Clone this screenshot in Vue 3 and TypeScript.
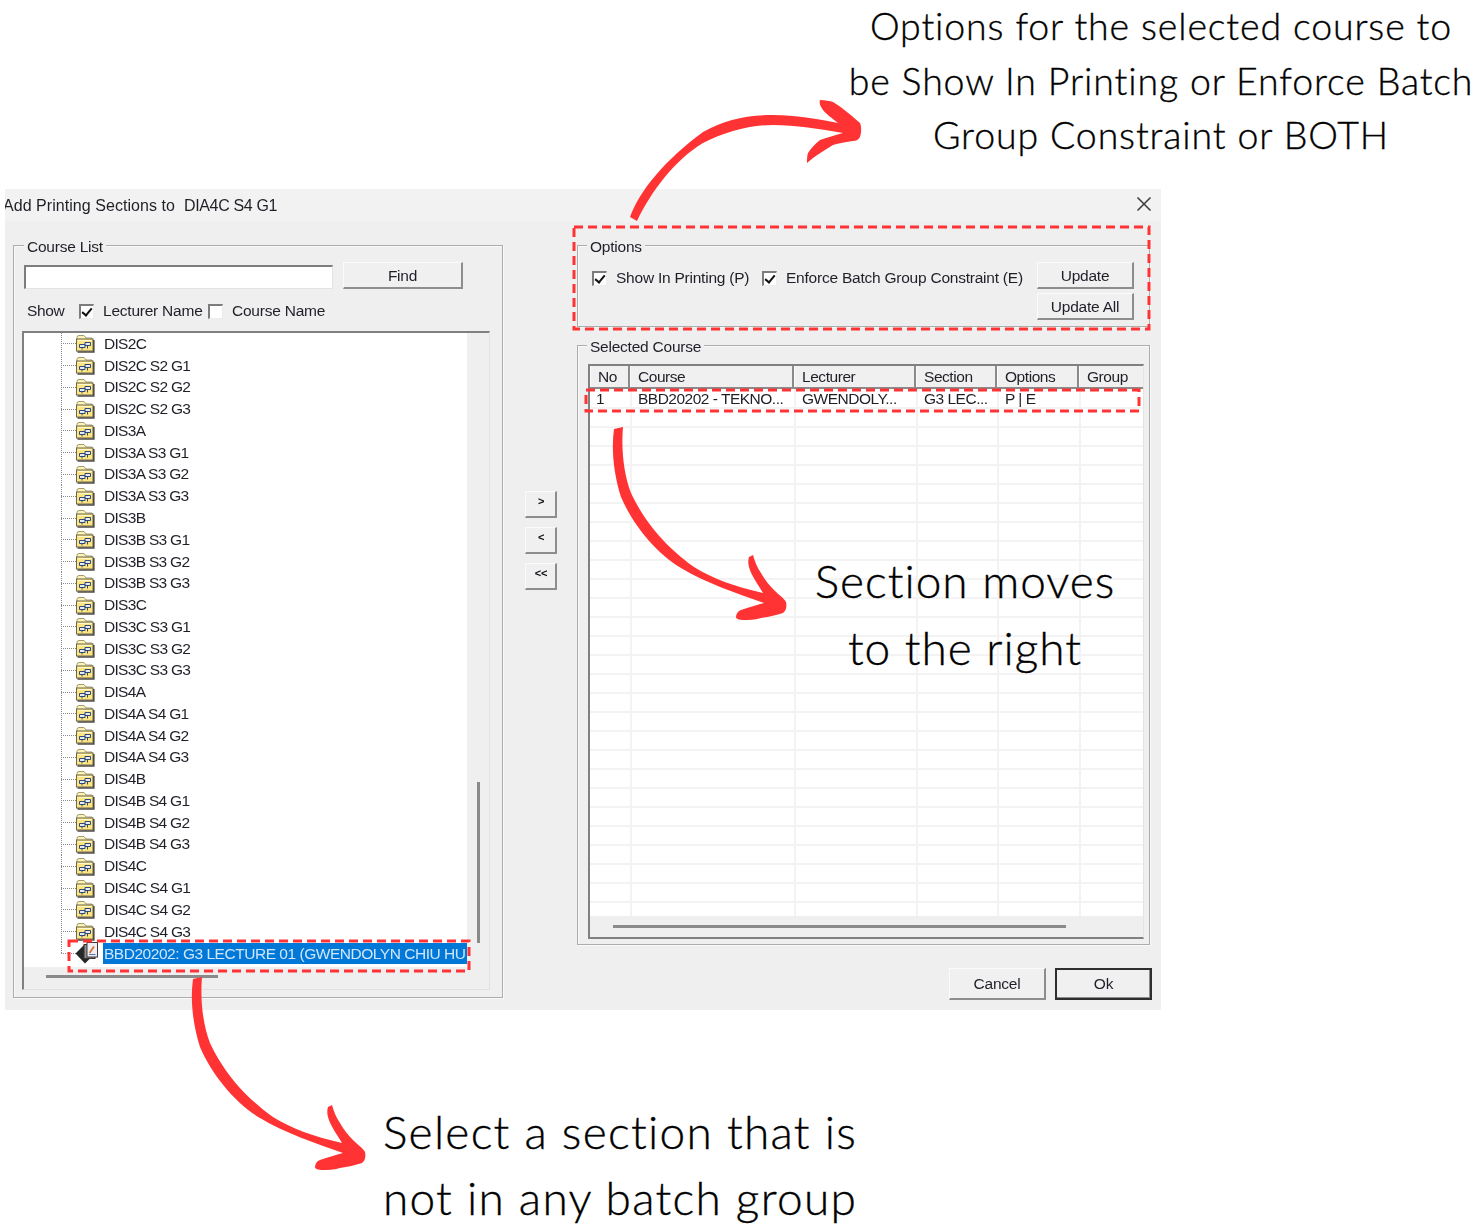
<script setup lang="ts">
const names: string[] = [];
const groups: [string, string, string[]][] = [
  ['DIS2C', 'S2', ['G1', 'G2', 'G3']],
  ['DIS3A', 'S3', ['G1', 'G2', 'G3']],
  ['DIS3B', 'S3', ['G1', 'G2', 'G3']],
  ['DIS3C', 'S3', ['G1', 'G2', 'G3']],
  ['DIS4A', 'S4', ['G1', 'G2', 'G3']],
  ['DIS4B', 'S4', ['G1', 'G2', 'G3']],
  ['DIS4C', 'S4', ['G1', 'G2', 'G3']],
];
for (const [c, s, gs] of groups) {
  names.push(c);
  for (const g of gs) names.push(`${c} ${s} ${g}`);
}
const columns = ['No', 'Course', 'Lecturer', 'Section', 'Options', 'Group'];
const firstRow = ['1', 'BBD20202 - TEKNO...', 'GWENDOLY...', 'G3 LEC...', 'P | E', ''];
const blankRows = Array.from({ length: 27 }, (_, i) => i);
const arrowPath =
  'M193 979 L202 977 C200 1000 203 1025 210 1043 C218 1060 235 1090 273 1117 C290 1128 315 1137 342 1143 C336 1133 330 1125 328 1117 C327 1113 327 1110 328 1107 L332 1105 C334 1112 336 1117 340 1123 C344 1130 348 1135 353 1140 C358 1145 363 1148 365 1152 C366 1157 365 1161 362 1163 C355 1165 348 1167 340 1168 C333 1170 328 1170 323 1170 C318 1170 315 1169 315 1167 C315 1164 317 1161 320 1160 C328 1157 336 1155 343 1153 C315 1143 285 1133 260 1118 C235 1103 212 1075 200 1047 C193 1025 190 1000 193 979 Z';
const topArrow =
  'M630 217 C640 190 665 160 703 132 C725 120 745 115 773 115 C795 115 818 119 838 123 C832 118 826 114 823 110 C820 106 819 103 820 100 C825 100 830 101 833 102 C840 106 850 114 860 123 C862 128 861 134 860 137 C858 140 856 141 853 141 C846 142 839 143 833 145 C826 149 819 154 813 158 L807 163 C807 159 807 156 808 153 C811 148 815 144 820 140 C828 137 836 135 843 133 C820 129 795 125 773 125 C750 125 725 132 703 143 C675 160 652 190 637 221 Z';
</script>

<template>
  <div class="canvas">
    <section class="dialog">
      <header class="titlebar">
        <span class="title">Add Printing Sections to&nbsp; <span class="title-name">DIA4C S4 G1</span></span>
        <svg class="close" width="16" height="16" viewBox="0 0 16 16">
          <path d="M1.5 1.5 L14.5 14.5 M14.5 1.5 L1.5 14.5" stroke="#3a3a3a" stroke-width="1.5" fill="none" />
        </svg>
      </header>

      <div class="body">
        <div class="group left-group">
          <span class="legend">Course List</span>
          <div class="find-row">
            <div class="input"></div>
            <button class="btn find">Find</button>
          </div>
          <div class="show-row">
            <span class="show">Show</span>
            <span class="check on"></span>
            <span class="lecturer">Lecturer Name</span>
            <span class="check"></span>
            <span class="course-name">Course Name</span>
          </div>
          <div class="tree">
            <div class="tree-list">
              <div v-for="n in names" :key="n" class="node">
                <span class="branch"></span>
                <svg class="folder" width="21" height="19" viewBox="0 0 21 19">
                  <path d="M2 6 L2 3.5 Q2 1.5 4 1.5 L9 1.5 L11 4 L17 4 L17 6 Z" fill="#fff3b4" stroke="#a09a70" />
                  <rect x="1.5" y="5" width="16.5" height="12" fill="#ffe57f" stroke="#6b6650" />
                  <path d="M18.8 6 V18 H2.5" stroke="#4f4c44" stroke-width="1.6" fill="none" />
                  <path d="M3 6.5 H16.5" stroke="#fff9d0" />
                  <path d="M10 8.5 H15.5 V11.5 H10 Z M4.5 10.5 H10 V13.5 H4.5 Z" fill="#e4ebf6" stroke="#2f4a78" stroke-width="1" />
                  <path d="M7 13.5 V15.5 M12.5 11.5 V14.5" stroke="#2f4a78" />
                </svg>
                <span class="label">{{ n }}</span>
              </div>
              <div class="node selected">
                <span class="branch last"></span>
                <svg class="book" width="25" height="24" viewBox="0 0 25 24">
                  <path d="M0.5 12.5 L10 3 L20 12.5 L10 22.5 Z" fill="#262626" />
                  <rect x="9" y="3.5" width="11" height="14" fill="#8d8d92" stroke="#333" />
                  <rect x="12" y="1.5" width="10.5" height="14.5" fill="#eeeef3" stroke="#3a3a3a" />
                  <path d="M14.5 12 L19 5.5" stroke="#d8742c" stroke-width="1.8" />
                  <path d="M14 13.5 H20.5" stroke="#5574b0" />
                </svg>
                <span class="label sel-label">BBD20202: G3 LECTURE 01 (GWENDOLYN CHIU HU</span>
              </div>
            </div>
            <div class="v-scroll"><span class="v-thumb"></span></div>
            <div class="h-scroll"><span class="h-thumb"></span></div>
            <div class="corner"></div>
          </div>
        </div>

        <div class="transfer">
          <button class="btn small">&gt;</button>
          <button class="btn small">&lt;</button>
          <button class="btn small">&lt;&lt;</button>
        </div>

        <div class="right">
          <div class="group options">
            <span class="legend">Options</span>
            <div class="opt-row">
              <span class="check on"></span>
              <span class="opt-a">Show In Printing (P)</span>
              <span class="check on"></span>
              <span class="opt-b">Enforce Batch Group Constraint (E)</span>
              <div class="opt-buttons">
                <button class="btn upd">Update</button>
                <button class="btn upd">Update All</button>
              </div>
            </div>
          </div>

          <div class="group selected-group">
            <span class="legend">Selected Course</span>
            <div class="listview">
              <div class="lv-head">
                <span v-for="c in columns" :key="c" class="th">{{ c }}</span>
              </div>
              <div class="lv-rows">
                <div class="lv-row">
                  <span v-for="(v, i) in firstRow" :key="i" class="td">{{ v }}</span>
                </div>
                <div v-for="r in blankRows" :key="r" class="lv-row">
                  <span v-for="c in columns" :key="c" class="td"></span>
                </div>
              </div>
              <div class="lv-scroll"><span class="lv-thumb"></span></div>
            </div>
          </div>

          <div class="footer">
            <button class="btn foot">Cancel</button>
            <button class="btn foot default">Ok</button>
          </div>
        </div>
      </div>
    </section>

    <svg class="overlay" width="1473" height="1229" viewBox="0 0 1473 1229">
      <g fill="none" stroke="#ff3333" stroke-width="3" stroke-dasharray="9 5">
        <rect x="574" y="227" width="575" height="102" />
        <rect x="586" y="390" width="553" height="21" />
        <rect x="69" y="941" width="400" height="30" />
      </g>
      <g fill="#ff3333">
        <path :d="topArrow" />
        <path :d="arrowPath" />
        <path :d="arrowPath" transform="translate(421 -550)" />
      </g>
    </svg>

    <div class="caption cap-top">
      <div>Options for the selected course to</div>
      <div>be Show In Printing or Enforce Batch</div>
      <div>Group Constraint or BOTH</div>
    </div>
    <div class="caption cap-mid">
      <div>Section moves</div>
      <div>to the right</div>
    </div>
    <div class="caption cap-bot">
      <div>Select a section that is</div>
      <div>not in any batch group</div>
    </div>
  </div>
</template>

<style>
html,
body {
  margin: 0;
  background: #fff;
}
</style>

<style scoped>
.canvas {
  position: relative;
  width: 1473px;
  height: 1229px;
  overflow: hidden;
  background: #fff;
  padding-top: 189px;
  box-sizing: border-box;
}
.dialog {
  margin-left: 5px;
  width: 1156px;
  height: 821px;
  background: #efefef;
  display: flex;
  flex-direction: column;
  overflow: hidden;
  font-family: "Liberation Sans", Arial, sans-serif;
  font-size: 15.5px;
  letter-spacing: -0.23px;
  color: #1f1f28;
  filter: blur(0.35px);
}
.titlebar {
  height: 33px;
  flex: none;
  background: #f3f2f2;
  display: flex;
  align-items: center;
  justify-content: space-between;
  padding-right: 9px;
  font-size: 16px;
  letter-spacing: 0.05px;
}
.title {
  margin-left: -2px;
  white-space: pre;
}
.title-name {
  letter-spacing: -0.35px;
}
.close {
  margin-top: -3px;
}
.body {
  flex: 1;
  display: flex;
  padding: 23px 0 12px 8px;
  min-height: 0;
}
.group {
  position: relative;
  box-sizing: border-box;
  border: 1px solid #adadad;
  box-shadow: inset 1px 1px 0 #f9f9f9, 1px 1px 0 #f9f9f9;
}
.legend {
  position: absolute;
  left: 10px;
  top: -8px;
  line-height: 18px;
  padding: 0 3px;
  background: #efefef;
}
.options .legend,
.selected-group .legend {
  left: 9px;
}
.left-group {
  width: 490px;
  display: flex;
  flex-direction: column;
  padding: 16px 10px 7px 10px;
}
.find-row {
  display: flex;
  align-items: flex-end;
  gap: 10px;
}
.input {
  width: 309px;
  height: 24px;
  box-sizing: border-box;
  background: #fff;
  border-top: 2px solid #7d7d7d;
  border-left: 2px solid #7d7d7d;
  border-right: 1px solid #e3e3e3;
  border-bottom: 1px solid #e3e3e3;
}
.btn {
  box-sizing: border-box;
  padding: 0;
  margin: 0;
  font: inherit;
  letter-spacing: inherit;
  color: inherit;
  background: #f0f0f0;
  border-style: solid;
  border-width: 1px 2px 2px 1px;
  border-color: #fbfbfb #8d8d8d #8d8d8d #fbfbfb;
}
.find {
  width: 120px;
  height: 27px;
  padding-top: 2px;
}
.show-row {
  display: flex;
  align-items: center;
  height: 22px;
  margin-top: 11px;
  margin-left: 3px;
}
.show {
  width: 52px;
  letter-spacing: -0.4px;
}
.lecturer {
  margin-left: 9px;
  width: 105px;
  white-space: nowrap;
}
.course-name {
  margin-left: 9px;
  white-space: nowrap;
}
.check {
  flex: none;
  position: relative;
  width: 15px;
  height: 15px;
  box-sizing: border-box;
  background: #fff;
  border-style: solid;
  border-width: 2px 1px 1px 2px;
  border-color: #7d7d7d #ececec #ececec #7d7d7d;
}
.check.on::after {
  content: "";
  position: absolute;
  left: 3px;
  top: 0;
  width: 4px;
  height: 8px;
  border: solid #111;
  border-width: 0 2px 2px 0;
  transform: rotate(40deg);
}
.tree {
  flex: 1;
  min-height: 0;
  margin: 9px 2px 0 -2px;
  display: grid;
  grid-template-columns: 1fr 22px;
  grid-template-rows: 1fr 22px;
  border-top: 2px solid #808080;
  border-left: 2px solid #808080;
  border-right: 1px solid #e2e2e2;
  border-bottom: 1px solid #e2e2e2;
}
.tree-list {
  background: #fff;
  overflow: hidden;
  padding-left: 37px;
}
.node {
  display: flex;
  align-items: center;
  height: 21.78px;
  white-space: nowrap;
}
.branch {
  flex: none;
  align-self: stretch;
  width: 15px;
  background-image:
    repeating-linear-gradient(to bottom, #8a8a8a 0 1px, transparent 1px 2px),
    repeating-linear-gradient(to right, #8a8a8a 0 1px, transparent 1px 2px);
  background-size: 1px 100%, 100% 1px;
  background-position: 0 0, 0 50%;
  background-repeat: no-repeat;
}
.branch.last {
  background-size: 1px 50%, 100% 1px;
}
.folder {
  flex: none;
  margin-left: -1px;
}
.label {
  margin-left: 8px;
  font-size: 15.5px;
  letter-spacing: -0.7px;
}
.selected {
  height: 22px;
}
.book {
  flex: none;
  margin-left: -1px;
}
.sel-label {
  margin-left: 3px;
  flex: 1;
  min-width: 0;
  padding-left: 1px;
  height: 21px;
  line-height: 21px;
  background: #0078d7;
  color: #cfe6fb;
  letter-spacing: -0.47px;
}
.v-scroll {
  display: flex;
  justify-content: center;
  padding-top: 449px;
  box-sizing: border-box;
}
.v-thumb {
  width: 3px;
  height: 161px;
  background: #8a8a8a;
}
.h-scroll {
  padding: 8px 0 0 22px;
}
.h-thumb {
  display: block;
  width: 172px;
  height: 3px;
  background: #8a8a8a;
}
.transfer {
  width: 74px;
  flex: none;
  display: flex;
  flex-direction: column;
  align-items: center;
  gap: 9px;
  padding: 246px 0 0 1px;
  box-sizing: border-box;
}
.small {
  width: 32px;
  height: 27px;
  font-weight: 700;
  font-size: 11px;
  line-height: 14px;
  padding-bottom: 6px;
  padding-left: 2px;
  color: #0d0d14;
}
.right {
  width: 573px;
  display: flex;
  flex-direction: column;
  flex: none;
}
.right > * {
  flex: none;
}
.options {
  height: 82px;
}
.opt-row {
  display: flex;
  align-items: flex-start;
  padding: 16px 15px 0 14px;
}
.opt-row .check {
  margin-top: 9px;
}
.opt-a {
  margin: 7px 0 0 9px;
  width: 146px;
  white-space: nowrap;
}
.opt-b {
  margin: 7px 0 0 9px;
  width: 251px;
  white-space: nowrap;
}
.opt-buttons {
  display: flex;
  flex-direction: column;
  gap: 4px;
}
.upd {
  width: 97px;
  height: 27px;
  padding-top: 2px;
}
.selected-group {
  margin-top: 18px;
  height: 600px;
  padding: 18px 5px 5px 10px;
}
.listview {
  height: 100%;
  box-sizing: border-box;
  border-left: 2px solid #808080;
  border-top: 2px solid #808080;
  border-right: 1px solid #e4e4e4;
  border-bottom: 2px solid #808080;
  display: flex;
  flex-direction: column;
  background: #efefef;
}
.lv-head,
.lv-row {
  display: grid;
  grid-template-columns: 40px 164px 122px 81px 82px 1fr;
  flex: none;
}
.lv-row {
  grid-template-columns: 42px 164px 122px 81px 82px 1fr;
}
.lv-head {
  height: 23px;
  background: #f0f0f0;
  border-bottom: 2px solid #8a8a8a;
  box-sizing: border-box;
}
.th {
  border-right: 2px solid #8a8a8a;
  border-left: 1px solid #fbfbfb;
  padding-left: 7px;
  line-height: 21px;
  white-space: nowrap;
  overflow: hidden;
  letter-spacing: -0.45px;
}
.th:last-child {
  border-right: 0;
}
.lv-rows {
  height: 527px;
  flex: none;
  overflow: hidden;
  background: #fff;
}
.lv-row {
  height: 19px;
  box-sizing: border-box;
  border-bottom: 2px solid #f3f3f3;
}
.lv-row:first-child {
  height: 20px;
}
.td {
  padding-left: 6px;
  border-right: 2px solid #f3f3f3;
  line-height: 20px;
  white-space: nowrap;
  overflow: hidden;
  letter-spacing: -0.5px;
}
.td:last-child {
  border-right: 0;
}
.lv-scroll {
  flex: 1;
  padding: 9px 0 0 23px;
}
.lv-thumb {
  display: block;
  width: 453px;
  height: 3px;
  background: #8a8a8a;
}
.footer {
  display: flex;
  justify-content: flex-end;
  gap: 9px;
  margin: 23px -2px 0 0;
}
.foot {
  width: 97px;
  height: 32px;
}
.default {
  border: 2px solid #2e2e2e;
  box-shadow: inset -1px -1px 0 #8d8d8d;
}
.overlay {
  position: absolute;
  left: 0;
  top: 0;
  pointer-events: none;
}
.caption {
  position: absolute;
  text-align: center;
  white-space: nowrap;
  font-family: Lato, "Open Sans", sans-serif;
  font-weight: 300;
  color: #000;
  -webkit-text-stroke: 0.35px #000;
}
.cap-top {
  left: 761px;
  width: 800px;
  top: -1px;
  font-size: 37.5px;
  line-height: 54.7px;
  letter-spacing: 0.86px;
}
.cap-mid {
  left: 565px;
  width: 800px;
  top: 547px;
  font-size: 46px;
  line-height: 67px;
  letter-spacing: 1px;
}
.cap-bot {
  left: 220px;
  width: 800px;
  top: 1099px;
  font-size: 46px;
  line-height: 66px;
  letter-spacing: 1.3px;
}
</style>
